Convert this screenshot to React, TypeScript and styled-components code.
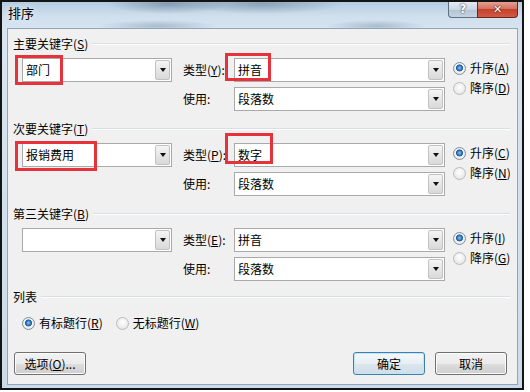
import React from "react";
import styled, { createGlobalStyle } from "styled-components";

const GlobalStyle = createGlobalStyle`
  html, body { margin: 0; padding: 0; background: #fff; }
  body {
    font-family: "Noto Sans CJK SC", "Noto Sans", sans-serif;
    font-size: 12px;
    color: #000;
  }
`;

const Window = styled.div`
  width: 524px;
  height: 390px;
  box-sizing: border-box;
  border: 2px solid #141414;
  padding: 0 4px 3px 5px;
  display: flex;
  flex-direction: column;
  background:
    radial-gradient(ellipse 60px 10px at 32% 2px, rgba(70, 95, 120, 0.45), transparent),
    radial-gradient(ellipse 80px 10px at 50% 2px, rgba(70, 95, 120, 0.4), transparent),
    radial-gradient(ellipse 50px 6px at 72% 24px, rgba(70, 95, 120, 0.3), transparent),
    radial-gradient(ellipse 60px 6px at 30% 24px, rgba(70, 95, 120, 0.3), transparent),
    linear-gradient(180deg, #b4cce1 0, #cfdfed 14px, #d8e5f1 28px, #cbdbe9 100%);
`;

const TitleBar = styled.div`
  height: 26px;
  flex: none;
  display: flex;
  align-items: flex-start;
`;

const Title = styled.div`
  font-size: 13px;
  line-height: 16px;
  padding: 3px 0 0 1px;
  text-shadow: 0 0 6px rgba(255, 255, 255, 0.9);
`;

const CaptionButtons = styled.div`
  margin-left: auto;
  display: flex;
`;

const HelpButton = styled.div`
  width: 29px;
  height: 16px;
  box-sizing: border-box;
  border: 1px solid #5d6f83;
  border-top: none;
  border-right: none;
  border-bottom-left-radius: 4px;
  background: linear-gradient(180deg, #e4ecf3 0%, #c9d6e2 50%, #b3c4d5 51%, #c5d4e2 100%);
  color: #fff;
  font: bold 12px/15px "DejaVu Sans", sans-serif;
  text-align: center;
  text-shadow: 0 0 2px #37475a, 0 0 1px #37475a;
`;

const CloseButton = styled.div`
  width: 41px;
  height: 16px;
  box-sizing: border-box;
  border: 1px solid #6b261c;
  border-top: none;
  border-bottom-right-radius: 4px;
  background: linear-gradient(180deg, #e5a091 0%, #d5715f 45%, #c4412d 50%, #d25a44 100%);
  color: #fff;
  font: bold 11px/15px "DejaVu Sans", sans-serif;
  text-align: center;
  text-shadow: 0 0 2px #4a1a12, 0 0 1px #4a1a12;
`;

const Client = styled.div`
  flex: 1;
  box-sizing: border-box;
  background: #f0f0f0;
  border: 1px solid #8fa6bc;
  padding: 7px 7px 9px 5px;
  display: flex;
  flex-direction: column;
`;

const SectionHeader = styled.div`
  height: 16px;
  display: flex;
  align-items: center;
  line-height: 16px;
  white-space: nowrap;
`;

const Rule = styled.div`
  flex: 1;
  margin-left: 4px;
  border-top: 1px solid #d5dfe5;
  border-bottom: 1px solid #ffffff;
`;

const SectionBody = styled.div<{ $after: number }>`
  display: grid;
  grid-template-columns: 150px 40px 211px auto;
  grid-template-rows: 24px 24px;
  column-gap: 11px;
  row-gap: 5px;
  margin: 6px 0 ${(p) => p.$after}px 9px;
`;

const FieldLabel = styled.div<{ $row: number }>`
  grid-column: 2;
  grid-row: ${(p) => p.$row};
  align-self: center;
  white-space: nowrap;
  line-height: 16px;
`;

const Combo = styled.div<{ $col: number; $row: number }>`
  grid-column: ${(p) => p.$col};
  grid-row: ${(p) => p.$row};
  position: relative;
  box-sizing: border-box;
  height: 24px;
  background: #fff;
  border: 1px solid #a9a9a9;
  display: flex;
  align-items: center;
  padding-left: 3px;
  line-height: 16px;
`;

const DropButton = styled.div`
  margin-left: auto;
  margin-right: 1px;
  width: 15px;
  height: 20px;
  box-sizing: border-box;
  border: 1px solid #c2c2c2;
  border-radius: 2px;
  background: linear-gradient(180deg, #f5f5f5 0%, #e6e6e6 50%, #d9d9d9 100%);
  display: flex;
  align-items: center;
  justify-content: center;

  &::after {
    content: "";
    width: 0;
    height: 0;
    border-left: 3.5px solid transparent;
    border-right: 3.5px solid transparent;
    border-top: 4px solid #111;
  }
`;

const Mark = styled.span<{ $x: number; $y: number; $w: number; $h: number }>`
  position: absolute;
  left: ${(p) => p.$x}px;
  top: ${(p) => p.$y}px;
  width: ${(p) => p.$w}px;
  height: ${(p) => p.$h}px;
  box-sizing: border-box;
  border: 3px solid #e6323a;
  pointer-events: none;
`;

const RadioGroup = styled.div`
  grid-column: 4;
  grid-row: 1 / span 2;
  margin-left: -3px;
  padding-top: 2px;
  display: flex;
  flex-direction: column;
  gap: 4px;
`;

const RadioItem = styled.label`
  height: 16px;
  display: flex;
  align-items: center;
  gap: 4px;
  white-space: nowrap;
  line-height: 16px;
`;

const RadioDot = styled.span<{ $on?: boolean }>`
  width: 13px;
  height: 13px;
  box-sizing: border-box;
  border-radius: 50%;
  border: 1px solid ${(p) => (p.$on ? "#7d8ea1" : "#b9bcbf")};
  background: ${(p) =>
    p.$on
      ? "radial-gradient(circle at 50% 45%, #8fc6f0 0, #3d7fc2 2px, #1f5898 3.2px, #f4f4f4 3.8px, #dedede 100%)"
      : "radial-gradient(circle at 50% 40%, #ffffff 0, #ececec 60%, #d8d8d8 100%)"};
  flex: none;
`;

const ListRow = styled.div`
  display: flex;
  align-items: center;
  height: 16px;
  margin: 10px 0 0 9px;
  gap: 13px;
`;

const ButtonRow = styled.div`
  margin-top: auto;
  display: flex;
  padding-left: 1px;
  padding-right: 3px;
  gap: 10px;
`;

const Button = styled.div<{ $default?: boolean }>`
  width: 72px;
  height: 23px;
  box-sizing: border-box;
  border: 1px solid ${(p) => (p.$default ? "#3c7fb1" : "#707070")};
  border-radius: 3px;
  box-shadow: inset 0 0 0 1px ${(p) => (p.$default ? "#c4e5f6" : "#fbfbfb")};
  background: ${(p) =>
    p.$default
      ? "linear-gradient(180deg, #f4f8fb 0%, #e8eff4 50%, #dbe6ee 51%, #d0dde8 100%)"
      : "linear-gradient(180deg, #f2f2f2 0%, #ebebeb 50%, #dddddd 51%, #cfcfcf 100%)"};
  display: flex;
  align-items: center;
  justify-content: center;
  line-height: 16px;
`;

const Spacer = styled.div`
  flex: 1;
`;

type MarkBox = { x: number; y: number; w: number; h: number };

type SortSectionProps = {
  title: React.ReactNode;
  key1?: string;
  key1Mark?: MarkBox;
  typeLabel: React.ReactNode;
  typeValue: string;
  typeMark?: MarkBox;
  asc: React.ReactNode;
  desc: React.ReactNode;
  after: number;
};

const SortSection = (props: SortSectionProps) => (
  <>
    <SectionHeader>
      {props.title}
      <Rule />
    </SectionHeader>
    <SectionBody $after={props.after}>
      <Combo $col={1} $row={1}>
        {props.key1}
        <DropButton />
        {props.key1Mark && (
          <Mark $x={props.key1Mark.x} $y={props.key1Mark.y} $w={props.key1Mark.w} $h={props.key1Mark.h} />
        )}
      </Combo>
      <FieldLabel $row={1}>{props.typeLabel}</FieldLabel>
      <Combo $col={3} $row={1}>
        {props.typeValue}
        <DropButton />
        {props.typeMark && (
          <Mark $x={props.typeMark.x} $y={props.typeMark.y} $w={props.typeMark.w} $h={props.typeMark.h} />
        )}
      </Combo>
      <FieldLabel $row={2}>使用:</FieldLabel>
      <Combo $col={3} $row={2}>
        段落数
        <DropButton />
      </Combo>
      <RadioGroup>
        <RadioItem>
          <RadioDot $on />
          {props.asc}
        </RadioItem>
        <RadioItem>
          <RadioDot />
          {props.desc}
        </RadioItem>
      </RadioGroup>
    </SectionBody>
  </>
);

export default function App() {
  return (
    <>
      <GlobalStyle />
      <Window>
        <TitleBar>
          <Title>排序</Title>
          <CaptionButtons>
            <HelpButton>?</HelpButton>
            <CloseButton>✕</CloseButton>
          </CaptionButtons>
        </TitleBar>
        <Client>
          <SortSection
            title={<span>主要关键字(<u>S</u>)</span>}
            key1="部门"
            key1Mark={{ x: -8, y: -4, w: 48, h: 30 }}
            typeLabel={<span>类型(<u>Y</u>):</span>}
            typeValue="拼音"
            typeMark={{ x: -10, y: -6, w: 46, h: 28 }}
            asc={<span>升序(<u>A</u>)</span>}
            desc={<span>降序(<u>D</u>)</span>}
            after={10}
          />
          <SortSection
            title={<span>次要关键字(<u>T</u>)</span>}
            key1="报销费用"
            key1Mark={{ x: -8, y: -3, w: 82, h: 30 }}
            typeLabel={<span>类型(<u>P</u>):</span>}
            typeValue="数字"
            typeMark={{ x: -10, y: -11, w: 48, h: 31 }}
            asc={<span>升序(<u>C</u>)</span>}
            desc={<span>降序(<u>N</u>)</span>}
            after={10}
          />
          <SortSection
            title={<span>第三关键字(<u>B</u>)</span>}
            typeLabel={<span>类型(<u>E</u>):</span>}
            typeValue="拼音"
            asc={<span>升序(<u>I</u>)</span>}
            desc={<span>降序(<u>G</u>)</span>}
            after={8}
          />
          <SectionHeader>
            列表
            <Rule />
          </SectionHeader>
          <ListRow>
            <RadioItem>
              <RadioDot $on />
              <span>有标题行(<u>R</u>)</span>
            </RadioItem>
            <RadioItem>
              <RadioDot />
              <span>无标题行(<u>W</u>)</span>
            </RadioItem>
          </ListRow>
          <ButtonRow>
            <Button>
              <span>选项(<u>O</u>)...</span>
            </Button>
            <Spacer />
            <Button $default>确定</Button>
            <Button>取消</Button>
          </ButtonRow>
        </Client>
      </Window>
    </>
  );
}
